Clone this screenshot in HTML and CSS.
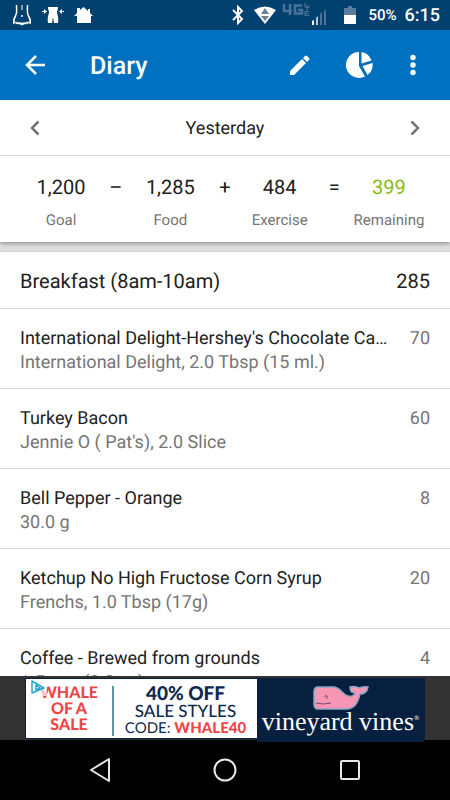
FILE: index.html
```html
<!DOCTYPE html>
<html lang="en">
<head>
<meta charset="utf-8">
<meta name="viewport" content="width=device-width, initial-scale=1">
<title>Diary</title>
<link rel="stylesheet" href="styles.css">
</head>
<body>
<div class="status">
  <div class="status-group">
    <svg width="20" height="22" viewBox="0 0 20 22" fill="none" stroke="#fff" stroke-width="1.5"><path d="M4.500 1C4.500 7 5.500 9 3.500 12C1.500 15 1.500 18 2 20M15.500 1C15.500 7 14.500 9 16.500 12C18.500 15 18.500 18 18 20"/><path d="M10 1v5" stroke-width="1"/><circle cx="10" cy="12" r="1" fill="#fff" stroke="none"/><path d="M3 18Q10 20 17 18L16 19.500Q12 19.500 10 21Q8 19.500 4 19.500Z" fill="#fff" stroke-width=".7"/></svg>
    <svg width="22" height="20" viewBox="0 0 22 20" fill="#fff"><path d="M6 2h10c0 3-1 4-1 5 0 3 2 4 1 11h-4l-1-6-1 6H6c-1-7 1-8 1-11 0-1-1-2-1-5ZM0 6h2V4l3 2.500L2 9V7H0zM22 6h-2V4l-3 2.500L20 9V7h2z"/></svg>
    <svg width="20" height="18" viewBox="0 0 20 18" fill="#fff"><path d="M9.500 1 14 5V3h2v4l3 3h-2v7H3v-7H0l3-3V2h3v2z"/></svg>
  </div>
  <div class="status-group status-right">
    <svg width="12" height="20" viewBox="0 0 12 20" fill="none" stroke="#fff" stroke-width="2"><path d="m1 5 9 9-4 4V2l4 4-9 9"/></svg>
    <svg class="wifi" width="22" height="18" viewBox="0 0 22 18"><path d="M0 4Q11-3 22 4L11 18Z" fill="#fff"/><path d="m11 2 4 6H7zM7 10h8l-4 5z" fill="#6f8190"/></svg>
    <svg class="signal" width="47" height="24" viewBox="0 0 47 24"><g fill="none" stroke="#4c7397" stroke-width="2.500"><path d="M2 1v7h8M8 1v11M20 2.500h-7v8h7V7h-4"/></g><path d="M23 0v3h4.500M23 4.500h4.500M25.200 4.500v3M27.500 8.500H23v4h4.500M23 10.500h4" fill="none" stroke="#4c7397" stroke-width="1.200"/><path d="M30 22v-4l2-1v5z" fill="#fff"/><path d="M38 22V11l2-2v13zM42 22V8l2-2v16z" fill="#4c7397"/><path d="M34 22v-7l2-2v9z" fill="#b8c9d8"/></svg>
    <svg class="battery" width="12" height="18" viewBox="0 0 12 18"><path d="M0 2h4V0h4v2h4v7H0z" fill="#5a7d9c"/><path d="M0 9h12v9H0z" fill="#fff"/></svg>
    <span class="percent">50%</span>
    <span class="clock">6:15</span>
  </div>
</div>
<header class="appbar">
  <button class="icon-button" aria-label="Back"><svg width="22" height="22" viewBox="0 0 22 22" fill="none" stroke="#fff" stroke-width="2.500"><path d="M21 11H3M12 2l-9 9 9 9"/></svg></button>
  <h1>Diary</h1>
  <button class="icon-button" aria-label="Edit"><svg width="22" height="22" viewBox="0 0 22 22" fill="#fff"><path d="M1 17 13 5l4 4L5 21H1zM14 4l2-2q1-1 2 0l2 2q1 1 0 2l-2 2z"/></svg></button>
  <button class="icon-button" aria-label="Nutrition"><svg width="28" height="28" viewBox="0 0 28 28" fill="#fff"><path d="M13 1v14l6 10.500A13 13 0 1 1 13 1ZM15.500 1A13 13 0 0 1 25.500 9.500L15.500 12.500ZM26.500 12A13 13 0 0 1 21.500 24L16.500 15Z"/></svg></button>
  <button class="icon-button more" aria-label="More options"><svg width="6" height="22" viewBox="0 0 6 22" fill="#fff"><circle cx="3" cy="3.500" r="2.700"/><circle cx="3" cy="11" r="2.700"/><circle cx="3" cy="18.500" r="2.700"/></svg></button>
</header>
<main>
  <section class="summary">
    <nav class="dates">
      <button class="icon-button" aria-label="Previous day"><svg width="10" height="16" viewBox="0 0 10 16" fill="none" stroke="#757575" stroke-width="2.500"><path d="M8.500 1.500 2 8l6.500 6.500"/></svg></button>
      <span>Yesterday</span>
      <button class="icon-button" aria-label="Next day"><svg width="10" height="16" viewBox="0 0 10 16" fill="none" stroke="#757575" stroke-width="2.500"><path d="M1.500 1.500 8 8l-6.500 6.500"/></svg></button>
    </nav>
    <div class="totals">
      <div class="total"><b>1,200</b><small>Goal</small></div>
      <b>–</b>
      <div class="total"><b>1,285</b><small>Food</small></div>
      <b>+</b>
      <div class="total"><b>484</b><small>Exercise</small></div>
      <b>=</b>
      <div class="total remaining"><b>399</b><small>Remaining</small></div>
    </div>
  </section>
  <section class="meal">
    <div class="meal-head"><h2>Breakfast (8am-10am)</h2><span>285</span></div>
    <ul>
      <li><div class="food"><h3>International Delight-Hershey's Chocolate Ca…</h3><p>International Delight, 2.0 Tbsp (15 ml.)</p></div><span>70</span></li>
      <li><div class="food"><h3>Turkey Bacon</h3><p>Jennie O ( Pat's), 2.0 Slice</p></div><span>60</span></li>
      <li><div class="food"><h3>Bell Pepper - Orange</h3><p>30.0 g</p></div><span>8</span></li>
      <li><div class="food"><h3>Ketchup No High Fructose Corn Syrup</h3><p>Frenchs, 1.0 Tbsp (17g)</p></div><span>20</span></li>
      <li><div class="food"><h3>Coffee - Brewed from grounds</h3><p>1.5 cup (8.0 oz)</p></div><span>4</span></li>
    </ul>
  </section>
</main>
<aside class="ad">
  <a class="banner" href="#">
    <svg class="adchoices" width="21" height="17" viewBox="0 0 21 17"><path d="M0 0h21v17H0z" fill="#fff" fill-opacity=".65"/><path d="M6 2v12l12-5zM10 6v5l4-2z" fill="none" stroke="#28a9cc" stroke-width="1.500" stroke-linejoin="round"/></svg>
    <span class="sale"><span>WHALE</span><span>OF A</span><span>SALE</span></span>
    <span class="offer"><strong>40% OFF</strong><span>SALE STYLES</span><em>CODE: <b>WHALE40</b></em></span>
    <span class="brand">
      <svg width="56" height="25" viewBox="0 0 56 25"><path d="M5 2h15c8 0 9 8 15 9 4 1 7-1 7-3-4 0-5-3-5-6 4-1 7 0 9 1 3-1 6-2 9-1-1 5-4 7-8 7-2 8-5 15-14 15H5c-3 0-4-2-4-5V7c0-3 1-5 4-5Z" fill="#f995b5" stroke="#8aa4c4" stroke-width="1.500"/><path d="M3 18q7 2 15 0M11 12q1-2 3-1 1 2-1 3" fill="none" stroke="#6c4b75"/></svg>
      <span class="brand-name">vineyard vines<sup>®</sup></span>
    </span>
  </a>
</aside>
<nav class="system">
  <button class="icon-button" aria-label="Back"><svg width="24" height="26" viewBox="0 0 24 26" fill="none" stroke="#e8e8e8" stroke-width="2" stroke-linejoin="round"><path d="M21 2v22L3 13z"/></svg></button>
  <button class="icon-button" aria-label="Home"><svg width="24" height="24" viewBox="0 0 24 24" fill="none" stroke="#e8e8e8" stroke-width="2"><circle cx="12" cy="12" r="10.500"/></svg></button>
  <button class="icon-button" aria-label="Recent apps"><svg width="22" height="22" viewBox="0 0 22 22" fill="none" stroke="#e8e8e8" stroke-width="2"><rect x="2" y="2" width="18" height="18" rx="1"/></svg></button>
</nav>
</body>
</html>
```
FILE: styles.css
```css
* { box-sizing: border-box; }
body {
  margin: 0;
  height: 100vh;
  display: flex;
  flex-direction: column;
  font-family: Roboto, "Liberation Sans", sans-serif;
  text-rendering: geometricPrecision;
  color: #212121;
  background: #fff;
}
h1, h2, h3, p, ul { margin: 0; padding: 0; font-weight: 400; }
svg { display: block; flex: none; }
.icon-button {
  display: flex;
  align-items: center;
  justify-content: center;
  width: 60px;
  padding: 0;
  border: 0;
  background: none;
}
.status {
  flex: none;
  height: 30px;
  padding: 0 10px 0 12px;
  display: flex;
  align-items: center;
  justify-content: space-between;
  background: #00416f;
  color: #fff;
}
.status-group { display: flex; align-items: center; gap: 10px; }
.status-right { gap: 12px; }
.wifi { margin-left: -2px; }
.signal { margin-left: -6px; }
.battery { margin-left: 3px; }
.percent { font-size: 15px; font-weight: 500; }
.clock { font-size: 18px; font-weight: 500; margin-left: -4px; }
.appbar {
  flex: none;
  height: 70px;
  padding: 0 15px 0 5px;
  display: flex;
  align-items: stretch;
  background: #0070c0;
  color: #fff;
}
h1 {
  flex: 1;
  margin-left: 25px;
  line-height: 74px;
  font-size: 25px;
  font-weight: 500;
}
.more { width: 45px; }
main { flex: 1; min-height: 0; overflow: hidden; background: #e0e0e0; }
.summary {
  position: relative;
  background: #fff;
  box-shadow: 0 1px 5px rgba(0, 0, 0, .45);
}
.dates {
  height: 56px;
  padding: 0 5px;
  display: flex;
  justify-content: space-between;
  border-bottom: 1px solid #dcdcdc;
  font-size: 18px;
  line-height: 58px;
}
.totals {
  padding: 18px 19px 11px;
  display: grid;
  grid-template-columns: 10fr 3fr 10fr 3fr 10fr 3fr 10fr;
  text-align: center;
}
.totals b { display: block; font-size: 20px; line-height: 26px; font-weight: 400; }
.totals small { display: block; margin-top: 9px; font-size: 15px; line-height: 22px; color: #757575; }
.totals .remaining b { color: #86bc10; }
.meal { margin-top: 9px; background: #fff; border-top: 1px solid #d2d2d2; }
.meal-head {
  height: 57px;
  padding: 0 20px;
  display: flex;
  justify-content: space-between;
  border-bottom: 1px solid #dcdcdc;
  font-size: 20px;
  line-height: 59px;
}
h2 { font-size: 20px; }
ul { list-style: none; }
li {
  height: 80px;
  padding: 18px 20px 0;
  display: flex;
  justify-content: space-between;
  gap: 16px;
  border-bottom: 1px solid #dcdcdc;
  font-size: 18px;
  line-height: 24px;
  color: #757575;
}
.food { min-width: 0; }
h3 {
  font-size: 18px;
  color: #212121;
  overflow: hidden;
  white-space: nowrap;
  text-overflow: ellipsis;
}
.ad {
  flex: none;
  height: 64px;
  padding: 2px 25px 1px;
  display: flex;
  justify-content: center;
  background: #333;
}
.banner {
  position: relative;
  flex: 1;
  max-width: 400px;
  display: grid;
  grid-template-columns: 86px 145px 1fr;
  border: 1px solid #08203f;
  background: #fff;
  color: #10294c;
  text-decoration: none;
  text-align: center;
  font-family: Lato, "Liberation Sans", sans-serif;
}
.adchoices { position: absolute; left: 0; top: 0; }
.sale {
  display: flex;
  flex-direction: column;
  padding-top: 6px;
  font-size: 16px;
  font-weight: 900;
  line-height: 16px;
  color: #ef4547;
}
.offer { margin: 7px 0 6px; border-left: 2px solid #4a9cae; display: flex; flex-direction: column; }
.offer strong { font-size: 19px; line-height: 16px; font-weight: 900; }
.offer span { font-size: 17px; line-height: 18px; font-weight: 500; }
.offer em { font-size: 15px; line-height: 16px; font-style: normal; }
.offer em b { font-weight: 900; color: #ef4547; }
.brand {
  display: flex;
  flex-direction: column;
  align-items: center;
  padding-top: 6px;
  background: #08203f;
  color: #fff;
}
.brand-name { font-family: "Liberation Serif", serif; font-size: 26px; line-height: 24px; white-space: nowrap; }
.brand-name sup { font-size: 7px; line-height: 7px; }
.system {
  flex: none;
  height: 60px;
  padding: 0 70px;
  display: flex;
  justify-content: space-between;
  background: #000;
}
```
